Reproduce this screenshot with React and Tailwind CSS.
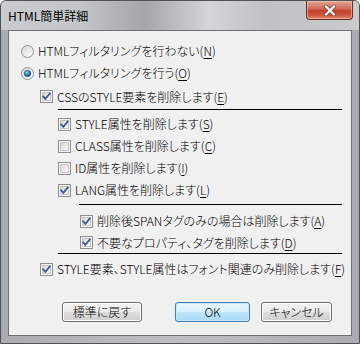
import React from 'react';

const font = "font-['Noto_Sans_CJK_JP','Noto_Sans',sans-serif] font-light [font-feature-settings:'palt'] text-[12px] leading-none text-black";

const CheckBox = ({ checked }) => (
  <svg width="13" height="13" viewBox="0 0 13 13" className="shrink-0">
    <defs>
      <linearGradient id="cbfill" x1="0" y1="0" x2="1" y2="1">
        <stop offset="0" stopColor="#d6d6d6" />
        <stop offset="1" stopColor="#fbfbfb" />
      </linearGradient>
    </defs>
    <rect x="0.5" y="0.5" width="12" height="12" fill="#f4f4f4" stroke="#8e8f8f" />
    <rect x="2.5" y="2.5" width="8" height="8" fill="url(#cbfill)" stroke="#c4c4c4" />
    {checked && (
      <path d="M3.2 6.4 L5.4 8.9 L9.8 3.4" fill="none" stroke="#41588c" strokeWidth="1.8" strokeLinecap="square" />
    )}
  </svg>
);

const Radio = ({ checked }) => (
  <svg width="13" height="13" viewBox="0 0 13 13" className="shrink-0">
    <defs>
      <linearGradient id="rdfill" x1="0" y1="0" x2="1" y2="1">
        <stop offset="0" stopColor="#d8d8d8" />
        <stop offset="1" stopColor="#fdfdfd" />
      </linearGradient>
      <radialGradient id="rddot" cx="0.4" cy="0.35" r="0.7">
        <stop offset="0" stopColor="#a6d8f4" />
        <stop offset="0.5" stopColor="#2f7dbf" />
        <stop offset="1" stopColor="#1a4f86" />
      </radialGradient>
    </defs>
    <circle cx="6.5" cy="6.5" r="6" fill="url(#rdfill)" stroke="#8e8f8f" />
    {checked && <circle cx="6.5" cy="6.5" r="3.3" fill="url(#rddot)" stroke="#2c5f91" strokeWidth="0.6" />}
  </svg>
);

const Key = ({ children }) => <span className="underline underline-offset-[2px]">{children}</span>;

const Row = ({ indent, h = 'h-[22px]', children }) => (
  <div className={`flex items-center gap-[4px] ${indent} ${h}`}>{children}</div>
);

const Btn = ({ children, primary, className }) => (
  <button
    className={`h-[20px] rounded-[3px] border ${font} ${
      primary
        ? 'border-[#3c7fb1] bg-[linear-gradient(#eaf6fd_0%,#d9f0fc_50%,#bee6fd_51%,#a7d9f5_100%)] shadow-[inset_0_0_0_1px_#c5e7fa]'
        : 'border-[#707070] bg-[linear-gradient(#f2f2f2_0%,#ebebeb_50%,#dddddd_51%,#cfcfcf_100%)] shadow-[inset_0_0_0_1px_#fcfcfc]'
    } ${className}`}
  >
    {children}
  </button>
);

export default function App() {
  return (
    <div className="w-[360px] h-[344px] rounded-t-[6px] border border-[#4f5357] bg-[linear-gradient(90deg,#a9adb1,#bdc0c3_50%,#a9adb1)] flex flex-col overflow-hidden">
      {/* title bar */}
      <div className="h-[29px] flex items-start justify-between bg-[linear-gradient(90deg,#c9ccce_0%,#c3c6c8_22%,#a4a7aa_40%,#d3d5d7_58%,#bfc1c3_74%,#c9cbcd_100%)]">
        <span className="pl-[7px] pt-[9px] font-['Noto_Sans_CJK_JP',sans-serif] text-[12px] leading-none text-black">HTML簡単詳細</span>
        <div className="mr-[6px] w-[47px] h-[19px] rounded-b-[4px] border border-t-0 border-[#6b3027] bg-[linear-gradient(#e2a496_0%,#d4715f_40%,#c2412b_55%,#cf5a43_80%,#e08a70_100%)] shadow-[inset_0_0_0_1px_rgba(255,210,200,0.5)] flex items-center justify-center">
          <svg width="14" height="11" viewBox="0 0 14 11">
            <path d="M3 1.5 L11 9.5 M11 1.5 L3 9.5" stroke="#5a1c12" strokeWidth="4" strokeLinecap="round" opacity="0.55" />
            <path d="M3 1.5 L11 9.5 M11 1.5 L3 9.5" stroke="#ffffff" strokeWidth="2.4" strokeLinecap="round" />
          </svg>
        </div>
      </div>

      {/* client area */}
      <div className={`mx-[7px] mb-[7px] flex-1 border border-[#6f7275] bg-[#f0f0f0] flex flex-col pt-[9px] ${font}`}>
        <Row indent="ml-[12px]">
          <Radio />
          <span>HTMLフィルタリングを行わない(<Key>N</Key>)</span>
        </Row>
        <Row indent="ml-[12px]">
          <Radio checked />
          <span>HTMLフィルタリングを行う(<Key>O</Key>)</span>
        </Row>
        <Row indent="ml-[31px]" h="h-[25px]">
          <CheckBox checked />
          <span>CSSのSTYLE要素を削除します(<Key>E</Key>)</span>
        </Row>
        <div className="ml-[49px] mr-[9px] h-px bg-black" />

        <div className="mt-[3px]">
          <Row indent="ml-[49px]">
            <CheckBox checked />
            <span>STYLE属性を削除します(<Key>S</Key>)</span>
          </Row>
          <Row indent="ml-[49px]">
            <CheckBox />
            <span>CLASS属性を削除します(<Key>C</Key>)</span>
          </Row>
          <Row indent="ml-[49px]">
            <CheckBox />
            <span>ID属性を削除します(<Key>I</Key>)</span>
          </Row>
          <Row indent="ml-[49px]">
            <CheckBox checked />
            <span>LANG属性を削除します(<Key>L</Key>)</span>
          </Row>
        </div>
        <div className="mt-[3px] ml-[70px] mr-[9px] h-px bg-black" />

        <div className="mt-[5px]">
          <Row indent="ml-[71px]">
            <CheckBox checked />
            <span>削除後SPANタグのみの場合は削除します(<Key>A</Key>)</span>
          </Row>
          <Row indent="ml-[71px]" h="h-[21px]">
            <CheckBox checked />
            <span>不要なプロパティ、タグを削除します(<Key>D</Key>)</span>
          </Row>
        </div>
        <div className="ml-[49px] mr-[9px] h-px bg-black" />

        <div className="mt-[4px]">
          <Row indent="ml-[31px]">
            <CheckBox checked />
            <span>STYLE要素、STYLE属性はフォント関連のみ削除します(<Key>F</Key>)</span>
          </Row>
        </div>

        <div className="mt-[22px] ml-[53px] flex">
          <Btn className="w-[80px]">標準に戻す</Btn>
          <Btn primary className="ml-[33px] w-[75px]">OK</Btn>
          <Btn className="ml-[11px] w-[71px]">キャンセル</Btn>
        </div>
      </div>
    </div>
  );
}
